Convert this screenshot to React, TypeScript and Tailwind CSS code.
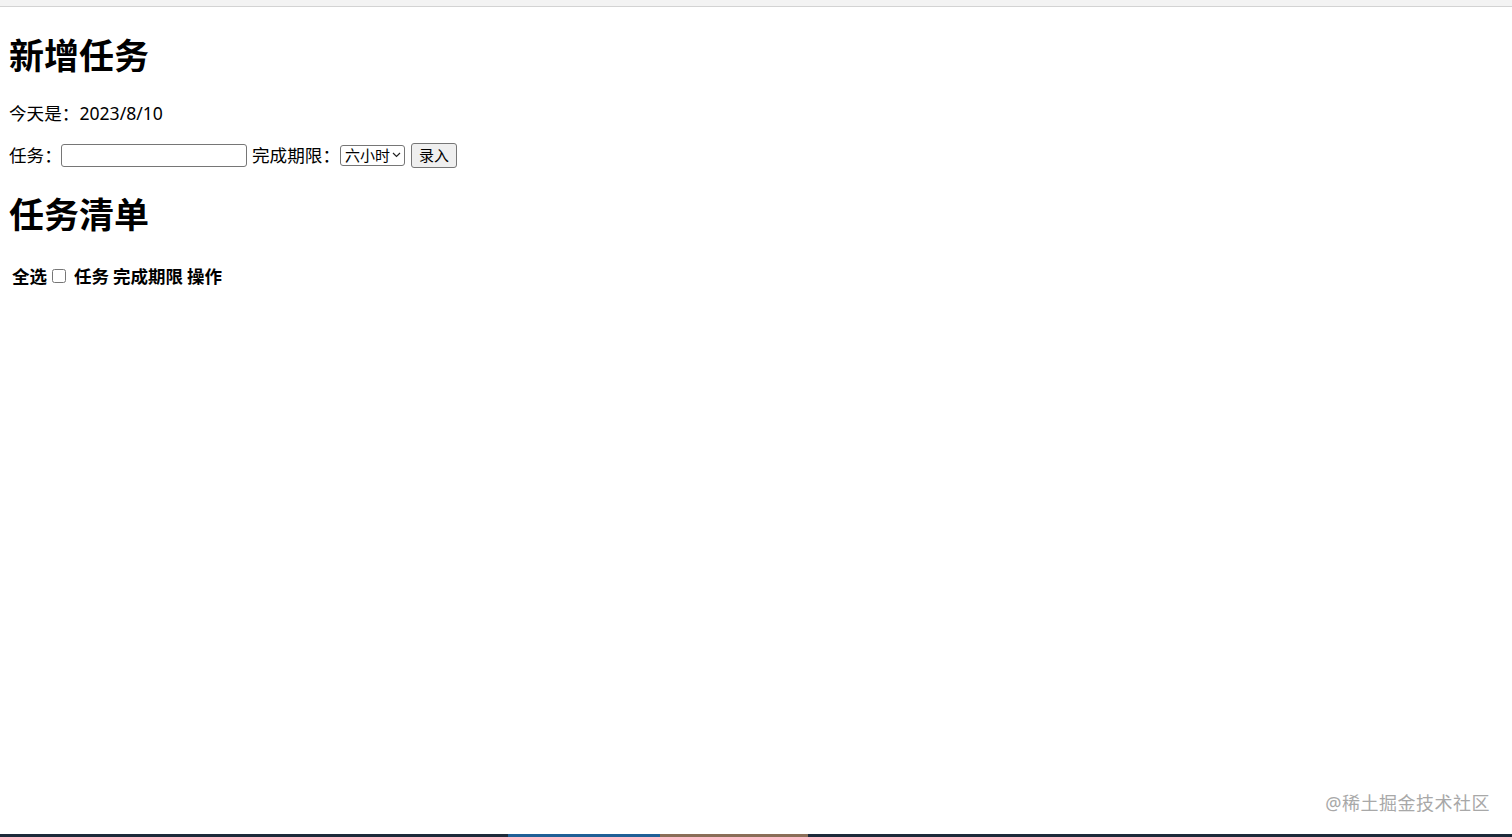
import { useState } from "react";

const font = { fontFamily: '"Noto Sans", "Noto Sans CJK SC", sans-serif' };

const TaskForm = () => {
  const [task, setTask] = useState("");

  return (
    <div className="mt-[17px] flex h-[26px] items-center text-[17.6px] leading-[26px] text-black">
      <label htmlFor="task" className="w-[52px] overflow-hidden whitespace-nowrap">任务：</label>
      <input
        id="task"
        value={task}
        onChange={(e) => setTask(e.target.value)}
        className="h-[23px] w-[186px] rounded-[3px] border border-[#767676] bg-white px-1 text-[15px]"
      />
      <span className="ml-[5px] w-[88px] overflow-hidden whitespace-nowrap">完成期限：</span>
      <div className="relative flex h-[21px] items-center">
        <select className="block h-[21px] w-[65px] appearance-none rounded-[3px] border border-[#767676] bg-white pl-[4px] pr-[14px] text-[15px] leading-[19px]">
          <option>六小时</option>
          <option>十二小时</option>
          <option>一天</option>
        </select>
        <svg
          className="pointer-events-none absolute right-[4px] top-[7px]"
          width="9"
          height="6"
          viewBox="0 0 9 6"
          fill="none"
          stroke="#222"
          strokeWidth="1.2"
        >
          <path d="M1 1l3.5 3.5L8 1" />
        </svg>
      </div>
      <button className="ml-[6px] h-[25px] w-[46px] rounded-[3px] border border-[#767676] bg-[#efefef] text-[15px] leading-[23px]">
        录入
      </button>
    </div>
  );
};

export default function App() {
  return (
    <div className="relative flex h-[837px] flex-col bg-white text-black" style={font}>
      {/* 浏览器顶部的边 */}
      <div className="h-[7px] border-b border-[#d3d3d3] bg-[#f3f3f3]" />

      <main className="flex-1 px-[9px]">
        <h1 className="mt-[29px] text-[35px] font-bold leading-[40px]">新增任务</h1>
        <p className="mt-[25px] text-[17.6px] leading-[24px]">今天是：2023/8/10</p>
        <TaskForm />
        <h2 className="mt-[27px] text-[35px] font-bold leading-[40px]">任务清单</h2>

        <table className="-ml-[2px] mt-[27px] border-separate border-spacing-[2px]">
          <thead>
            <tr className="text-[17.5px] font-bold leading-[24px]">
              <th className="pl-[3px] pr-[1px] align-middle">
                <span className="flex items-center">
                  全选
                  <input type="checkbox" className="ml-[5px] h-[14px] w-[14px]" />
                </span>
              </th>
              <th className="pl-[5px] pr-[1px]">任务</th>
              <th className="px-[1px]">完成期限</th>
              <th className="px-[1px]">操作</th>
            </tr>
          </thead>
          <tbody />
        </table>
      </main>

      {/* 水印 */}
      <div className="absolute right-[22px] top-[791px] text-[18px] leading-[24px] tracking-[0.5px] text-[#a8a8a8]">
        @稀土掘金技术社区
      </div>

      {/* 任务栏的边 */}
      <div className="flex h-[3px] bg-[#1c2a3a]">
        <div className="w-[508px]" />
        <div className="w-[152px] bg-[#1f5f96]" />
        <div className="w-[148px] bg-[#8a6e58]" />
      </div>
    </div>
  );
}
